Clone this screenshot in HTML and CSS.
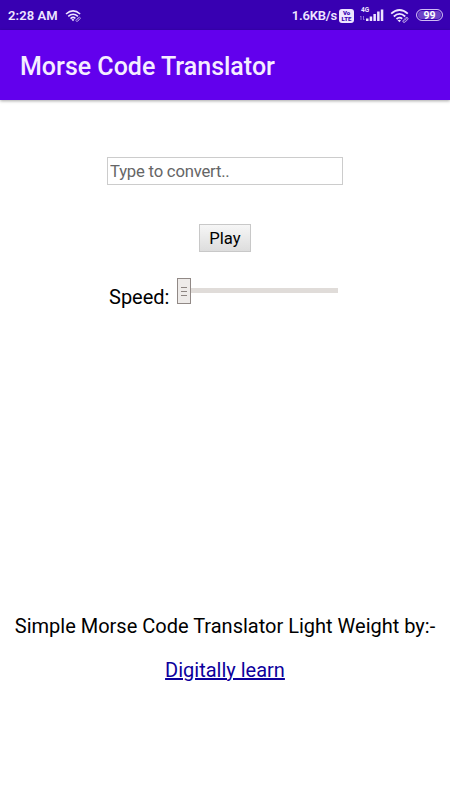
FILE: index.html
```html
<!DOCTYPE html>
<html lang="en">
<head>
<meta charset="utf-8">
<title>Morse Code Translator</title>
<link rel="stylesheet" href="styles.css">
</head>
<body>
<div class="status">
  <span class="time">2:28 AM</span>
  <svg class="wifi-small" width="17" height="14" viewBox="0 0 20 16"><use href="#wifi"/></svg>
  <span class="rate">1.6KB/s</span>
  <span class="volte"><span>Vo</span><span>LTE</span></span>
  <span class="cell">
    <svg width="24" height="16" viewBox="0 0 24 16">
      <text x="1" y="6" class="net">4G</text>
      <path class="arrows" d="M1 10v4M0 11l1-1M3.500 10v4l1-1"/>
      <path class="bars" d="M6 12.500h2.500V15H6zM9.700 10.500h2.500V15H9.700zM13.400 8h2.500v7h-2.500zM17.100 5.500h2.500V15h-2.500zM20.800 3.500h2.500V15h-2.500z"/>
    </svg>
  </span>
  <svg class="wifi" width="20" height="16" viewBox="0 0 20 16">
    <g id="wifi">
      <path class="arc" d="M1.200 5.700Q9.500-1.700 17.800 5.700M3.800 8.500Q9.500 3.300 15.200 8.500M6.500 11Q9.500 8.400 12.200 10.700"/>
      <path class="dot" d="M7.500 12.200Q9.500 11.100 11 12.300L9.500 14.200z"/>
      <path class="link" d="M13.400 12.200l2.400-2.300q1.500-1 2.200.2.300.9-.6 1.700l-2.200 2.200q-1.300.9-2.100 0-.6-.9.300-1.800M14.500 12.700l2.300-2.200"/>
    </g>
  </svg>
  <span class="battery">99</span>
</div>
<header class="appbar"><h1>Morse Code Translator</h1></header>
<main>
  <input class="entry" type="text" placeholder="Type to convert..">
  <button class="play">Play</button>
  <div class="speed">
    <label>Speed:</label>
    <div class="slider">
      <svg class="thumb" width="14" height="26" viewBox="0 0 14 26">
        <rect x=".5" y=".5" width="13" height="25"/>
        <path d="M4 9.500h6M4 13.500h6M4 17.500h6"/>
      </svg>
      <div class="track"></div>
    </div>
  </div>
  <p class="credit">Simple Morse Code Translator Light Weight by:-</p>
  <a class="author" href="#">Digitally learn</a>
</main>
</body>
</html>
```
FILE: styles.css
```css
* { box-sizing: border-box; }
body {
  margin: 0;
  height: 800px;
  overflow: hidden;
  background: #fff;
  color: #000;
  font-family: Roboto, sans-serif;
}
.status {
  height: 30px;
  background: #3800b2;
  color: #eee5ff;
  display: flex;
  align-items: center;
  padding: 1px 7px 0 8px;
  font-size: 13px;
  font-weight: 600;
  white-space: nowrap;
}
.time { width: 50px; letter-spacing: .1px; }
.wifi-small { margin-left: 7px; }
.rate { margin-left: auto; letter-spacing: -.2px; }
.volte {
  width: 15px;
  height: 14px;
  margin-left: 2px;
  border-radius: 3px;
  background: #eee5ff;
  color: #3800b2;
  display: flex;
  flex-direction: column;
  align-items: center;
  justify-content: center;
  font-size: 6px;
  font-weight: 900;
  line-height: 6px;
}
.cell { width: 24px; height: 16px; margin: -3px 0 0 6px; }
.cell svg { display: block; }
.net { font-size: 6.5px; font-weight: 700; fill: #eee5ff; }
.arrows { fill: none; stroke: #8b67d6; stroke-width: 1; }
.bars, .dot { fill: #eee5ff; }
.wifi { margin-left: 6px; }
.arc { fill: none; stroke: #eee5ff; stroke-width: 1.8; }
.link { fill: none; stroke: #cdbbef; stroke-width: .9; }
.battery {
  width: 27px;
  height: 12px;
  margin: -1px 0 0 6px;
  border: 1px solid #cfbcf3;
  border-radius: 6px;
  background: #6d43c7;
  box-shadow: inset 0 0 0 1px #3800b2;
  color: #fff;
  font-size: 10.5px;
  font-weight: 700;
  line-height: 11px;
  text-align: center;
}
.appbar {
  height: 70px;
  display: flex;
  align-items: center;
  padding: 4px 20px 0;
  background: #6200ed;
  color: #f5edff;
  box-shadow: 0 1px 3px rgba(0, 0, 0, .35);
}
h1 { margin: 0; font-size: 25px; font-weight: 500; line-height: 30px; }
main { display: flex; flex-direction: column; align-items: center; padding-top: 57px; }
.entry {
  width: 236px;
  height: 28px;
  padding: 1px 2px;
  border: 1px solid #ccc;
  border-radius: 0;
  background: #fff;
  font: 16.67px Roboto, sans-serif;
  letter-spacing: -.2px;
}
.entry::placeholder { color: #666; }
.play {
  width: 52px;
  height: 28px;
  margin-top: 39px;
  padding: 0;
  border: 1px solid #c8c8c8;
  border-radius: 0;
  background: linear-gradient(#f6f6f6, #ddd);
  color: #000;
  font: 16.67px Roboto, sans-serif;
}
.speed { width: 232px; height: 34px; margin-top: 26px; display: flex; }
.speed label { width: 68px; padding: 7px 0 0; font-size: 20px; line-height: 24px; }
.slider { height: 26px; flex: 1; display: flex; align-items: center; }
.thumb { flex: none; }
.thumb rect { fill: #eeebe9; stroke: #918986; stroke-width: 1; }
.thumb path { fill: none; stroke: #8d8581; stroke-width: 1; }
.track { width: 147px; height: 5px; margin-top: -1px; background: #e0dcd9; }
.credit { margin: 302px 0 0; font-size: 20px; line-height: 24px; white-space: nowrap; }
.author { margin-top: 20px; color: #0c009c; font-size: 20px; line-height: 24px; }
```
